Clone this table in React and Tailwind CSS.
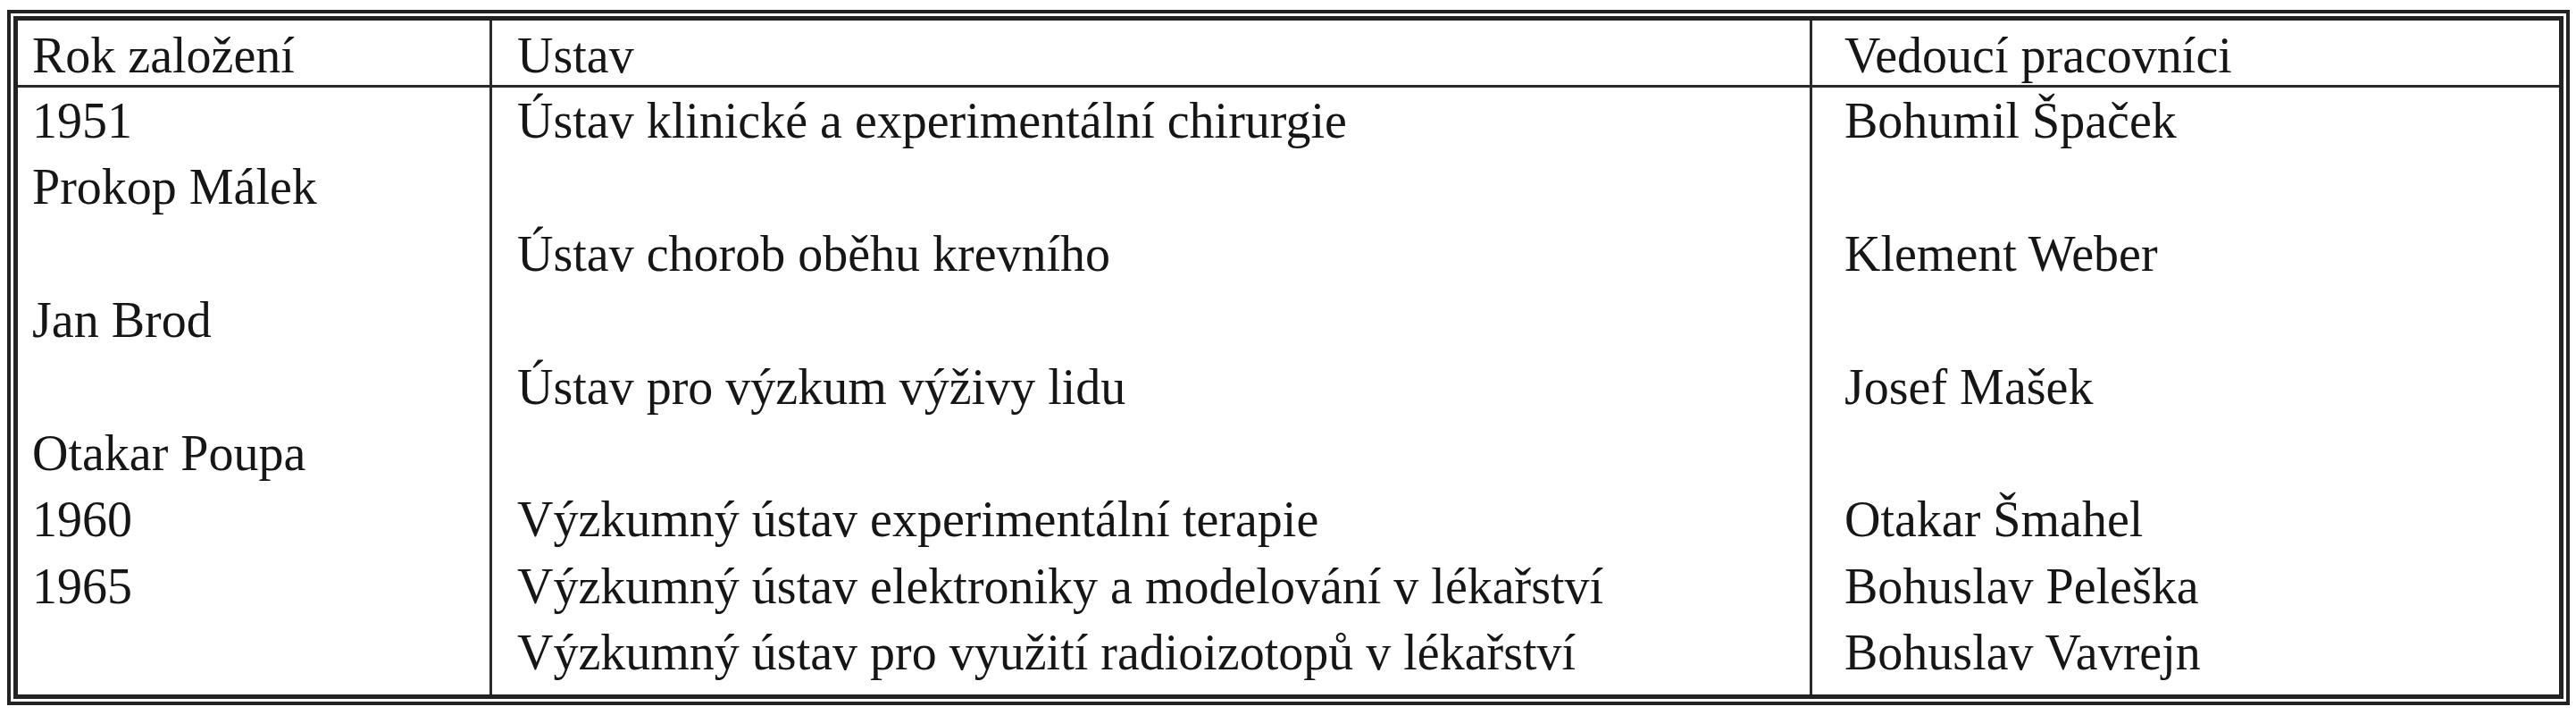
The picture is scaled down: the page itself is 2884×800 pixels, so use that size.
import React from "react";

const col1 = ["1951", "Prokop Málek", "", "Jan Brod", "", "Otakar Poupa", "1960", "1965", ""];
const col2 = [
  "Ústav klinické a experimentální chirurgie",
  "",
  "Ústav chorob oběhu krevního",
  "",
  "Ústav pro výzkum výživy lidu",
  "",
  "Výzkumný ústav experimentální terapie",
  "Výzkumný ústav elektroniky a modelování v lékařství",
  "Výzkumný ústav pro využití radioizotopů v lékařství",
];
const col3 = [
  "Bohumil Špaček",
  "",
  "Klement Weber",
  "",
  "Josef Mašek",
  "",
  "Otakar Šmahel",
  "Bohuslav Peleška",
  "Bohuslav Vavrejn",
];

function Lines({ items }) {
  return (
    <div className="flex flex-col">
      {items.map((t, i) => (
        <div key={i} className="h-[74.4px] leading-[74.4px] whitespace-nowrap">
          {t || "\u00a0"}
        </div>
      ))}
    </div>
  );
}

export default function App() {
  return (
    <div className="w-[2884px] h-[800px] bg-white pt-[11px] pl-[8px] font-['Liberation_Serif','Times_New_Roman',serif] text-[56px] text-[#161616]">
      <div className="w-[2869px] h-[778px] border-[4px] border-[#222] p-[3px]">
        <div className="h-full border-[5px] border-[#222] flex flex-col">
          <div className="grid grid-cols-[531px_1478px_1fr] h-[75px] border-b-[3px] border-[#2a2a2a]">
            <div className="border-r-[3px] border-[#2a2a2a] pl-[16px] pt-[6px] leading-[66px] whitespace-nowrap">
              Rok založení
            </div>
            <div className="border-r-[3px] border-[#2a2a2a] pl-[28px] pt-[6px] leading-[66px] whitespace-nowrap">
              Ustav
            </div>
            <div className="pl-[36px] pt-[6px] leading-[66px] whitespace-nowrap">
              Vedoucí pracovníci
            </div>
          </div>
          <div className="grid grid-cols-[531px_1478px_1fr] flex-1">
            <div className="border-r-[3px] border-[#2a2a2a] pl-[16px]">
              <Lines items={col1} />
            </div>
            <div className="border-r-[3px] border-[#2a2a2a] pl-[28px]">
              <Lines items={col2} />
            </div>
            <div className="pl-[36px]">
              <Lines items={col3} />
            </div>
          </div>
        </div>
      </div>
    </div>
  );
}
